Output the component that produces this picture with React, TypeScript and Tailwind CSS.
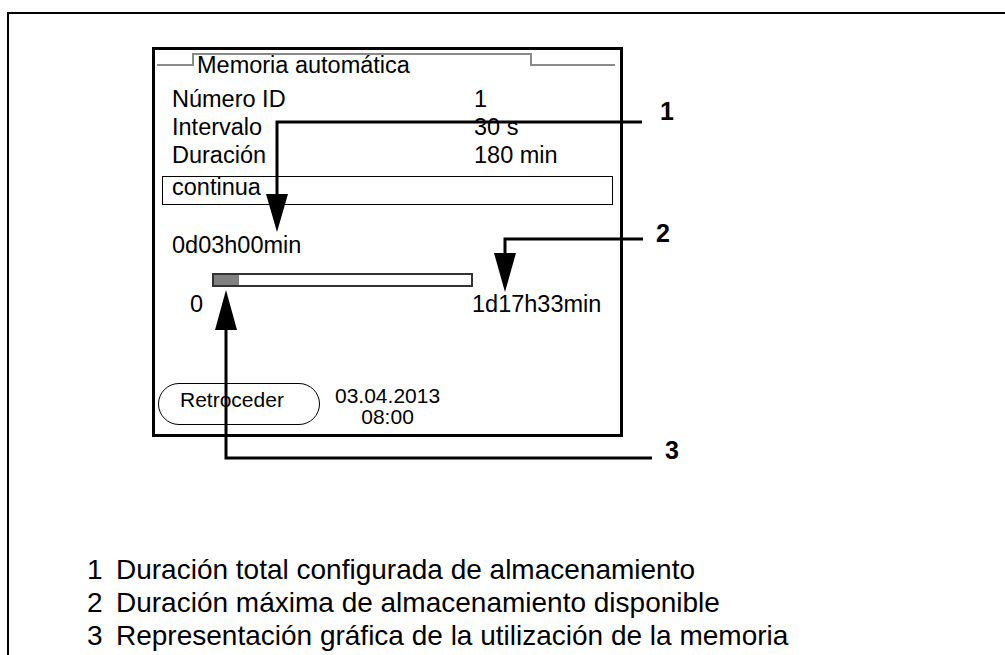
const ROWS = [
  { label: "Número ID", value: "1" },
  { label: "Intervalo", value: "30 s" },
  { label: "Duración", value: "180 min" },
];

const LEGEND = [
  "Duración total configurada de almacenamiento",
  "Duración máxima de almacenamiento disponible",
  "Representación gráfica de la utilización de la memoria",
];

function TitleTab() {
  return (
    <div className="flex h-[16px] shrink-0">
      <div className="ml-[2px] w-[35px] border-b-2 border-[#8a8a8a]" />
      <div className="mt-[3px] w-[340px] border-x-2 border-t-2 border-[#8a8a8a] pl-[3px] text-[23.5px] leading-[20px] whitespace-nowrap">
        Memoria automática
      </div>
      <div className="mr-[5px] flex-1 border-b-2 border-[#8a8a8a]" />
    </div>
  );
}

function DeviceScreen() {
  return (
    <div className="ml-[143px] mt-[33px] flex h-[390px] w-[471px] shrink-0 flex-col border-[3px] border-black">
      <TitleTab />

      {/* settings list */}
      <div className="mt-[19px] text-[23.5px] leading-[28px]">
        {ROWS.map((r) => (
          <div key={r.label} className="grid h-[28px] grid-cols-[302px_1fr] pl-[17px]">
            <span>{r.label}</span>
            <span>{r.value}</span>
          </div>
        ))}
      </div>
      <div className="mx-[7px] mt-[7px] h-[29px] border border-black pl-[9px] text-[23.5px] leading-[20px]">
        continua
      </div>

      <div className="mt-[26px] h-[28px] pl-[17px] text-[23.5px] leading-[28px]">0d03h00min</div>

      {/* memory usage bar */}
      <div className="ml-[57px] mt-[14px] flex h-[14px] w-[261px] border-2 border-[#333333] bg-white">
        <div className="h-full w-[25px] bg-[#808080]" />
      </div>
      <div className="mt-[3px] grid h-[28px] grid-cols-[317px_1fr] text-[23.5px] leading-[28px]">
        <span className="pl-[35px]">0</span>
        <span>1d17h33min</span>
      </div>

      {/* bottom bar */}
      <div className="mb-[7px] mt-auto flex items-start">
        <div className="ml-[3px] h-[42px] w-[162px] rounded-full border border-black pl-[21px] pt-[4px] text-[21px] leading-[24px]">
          Retroceder
        </div>
        <div className="ml-[15px] mt-[2px] text-center text-[21px] leading-[21px]">
          <div>03.04.2013</div>
          <div>08:00</div>
        </div>
      </div>
    </div>
  );
}

function Callouts() {
  return (
    <>
      <svg className="pointer-events-none absolute left-0 top-0" width={1005} height={655}>
        <g stroke="#000" strokeWidth={3} fill="none">
          <path d="M642 122 H277 V200" />
          <path d="M643 239 H505 V258" />
          <path d="M652 458 H226 V325" />
        </g>
        <g fill="#000">
          <polygon points="266,194 288,194 277,232" />
          <polygon points="494,253 516,253 505,292" />
          <polygon points="215,330 237,330 226,290" />
        </g>
      </svg>
      <span className="absolute left-[660px] top-[97px] text-[25px] font-bold leading-[28px]">1</span>
      <span className="absolute left-[656px] top-[219px] text-[25px] font-bold leading-[28px]">2</span>
      <span className="absolute left-[665px] top-[436px] text-[25px] font-bold leading-[28px]">3</span>
    </>
  );
}

export default function App() {
  return (
    <div
      className="relative h-[655px] w-[1005px] overflow-hidden bg-white text-black"
      style={{ fontFamily: '"Liberation Sans", Arial, sans-serif' }}
    >
      <div className="ml-[7px] mt-[12px] flex h-[643px] flex-col border-l-2 border-t-2 border-black">
        <DeviceScreen />

        <ol className="mt-[116px] text-[28px] leading-[33px]">
          {LEGEND.map((t, i) => (
            <li key={i} className="flex pl-[78px]">
              <span className="w-[29px]">{i + 1}</span>
              <span className="whitespace-nowrap">{t}</span>
            </li>
          ))}
        </ol>
      </div>
      <Callouts />
    </div>
  );
}
